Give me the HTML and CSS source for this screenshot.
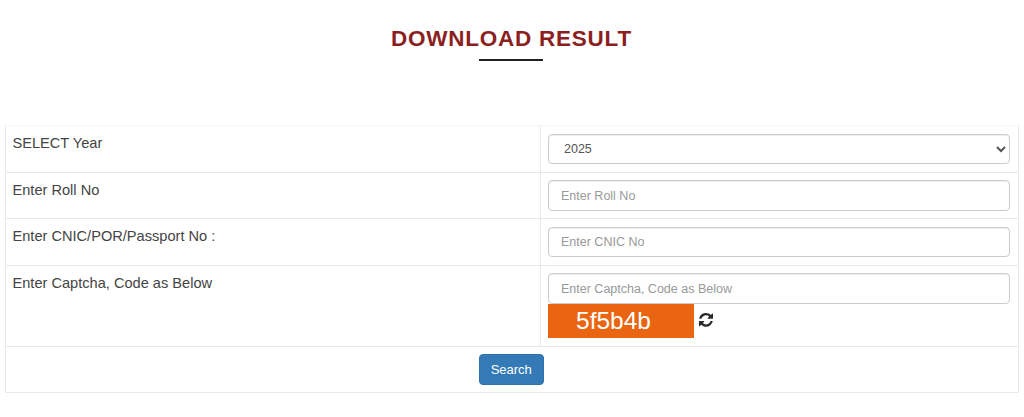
FILE: index.html
```html
<!DOCTYPE html>
<html lang="en">
<head>
<meta charset="utf-8">
<title>Download Result</title>
<link rel="stylesheet" href="styles.css">
</head>
<body>
<header class="heading">
  <h1>DOWNLOAD RESULT</h1>
  <div class="rule"></div>
</header>
<table class="form-table">
  <tbody>
    <tr>
      <td class="label">SELECT Year</td>
      <td class="field">
        <select class="control select"><option>2025</option></select>
      </td>
    </tr>
    <tr>
      <td class="label">Enter Roll No</td>
      <td class="field"><input class="control" type="text" placeholder="Enter Roll No"></td>
    </tr>
    <tr>
      <td class="label">Enter CNIC/POR/Passport No :</td>
      <td class="field"><input class="control" type="text" placeholder="Enter CNIC No"></td>
    </tr>
    <tr>
      <td class="label">Enter Captcha, Code as Below</td>
      <td class="field">
        <input class="control" type="text" placeholder="Enter Captcha, Code as Below">
        <div class="captcha-row">
          <div class="captcha">5f5b4b</div>
          <svg class="refresh" viewBox="0 0 1536 1536" aria-hidden="true"><path d="M1511 896q0 5-1 7-64 268-268 434.500T764 1504q-146 0-282.500-55T238 1292l-129 129q-19 19-45 19t-45-19-19-45V928q0-26 19-45t45-19h448q26 0 45 19t19 45-19 45L420 1110q71 66 161 102t187 36q134 0 250-65t186-179q11-17 53-117 8-23 30-23h192q13 0 22.500 9.500t9.500 22.500zM1536 128v448q0 26-19 45t-45 19h-448q-26 0-45-19t-19-45 19-45l138-138q-148-137-349-137-134 0-250 65T332 480q-11 17-53 117-8 23-30 23H50q-13 0-22.500-9.500T18 588v-7q65-268 270-434.500T768 0q146 0 284 55.500T1297 212l130-129q19-19 45-19t45 19 19 45z"/></svg>
        </div>
      </td>
    </tr>
    <tr>
      <td class="actions" colspan="2"><button class="btn" type="button">Search</button></td>
    </tr>
  </tbody>
</table>
</body>
</html>
```

FILE: styles.css
```css
* { box-sizing: border-box; }
html, body { margin: 0; padding: 0; background: #fff; }
body {
  height: 417px;
  overflow: hidden;
  font-family: "Liberation Sans", Arial, sans-serif;
  font-size: 14.6px;
  color: #444;
  padding: 0 5.5px 0 4.5px;
}
.heading {
  height: 125px;
  padding-top: 25px;
  text-align: center;
}
.heading h1 {
  margin: 0;
  font-size: 22.5px;
  line-height: 27px;
  font-weight: 700;
  letter-spacing: 0.75px;
  color: #8b1f1f;
}
.rule {
  width: 64px;
  height: 2px;
  margin: 7px 0 0 474px;
  background: #222;
}
.form-table {
  width: 100%;
  border-collapse: collapse;
  table-layout: fixed;
}
.form-table td {
  border: 1px solid #e9e9e9;
  padding: 7.5px 7.500px 7.5px 7px;
  vertical-align: top;
}
.form-table tr:first-child td { border-top-color: #f6f6f6; }
.form-table .label { width: 535.500px; padding-top: 8px; line-height: 18px; }
.control {
  display: block;
  width: 100%;
  height: 30.500px;
  padding: 1px 12px 0;
  border: 1px solid #ccc;
  border-radius: 4px;
  background: #fff;
  color: #555;
  font-family: inherit;
  font-size: 12.500px;
  box-shadow: inset 0 1px 1px rgba(0,0,0,.075);
}
.control::placeholder { color: #999; opacity: 1; }
.select { padding: 0 12px 0 11px; }
.captcha-row { display: flex; align-items: center; }
.captcha {
  width: 146px;
  height: 34.500px;
  padding-left: 28px;
  background: #e96511;
  color: #fff;
  font-size: 24.500px;
  line-height: 34px;
}
.refresh { width: 14px; height: 14px; margin: 0 0 2px 4.500px; fill: #2a2a2a; }
.form-table .actions { text-align: center; height: 45px; }
.btn {
  display: block;
  width: 65px;
  height: 30.500px;
  margin: 0 auto;
  padding: 0;
  border: 1px solid #2f72ab;
  border-radius: 4px;
  background: #337ab7;
  color: #fff;
  font-family: inherit;
  font-size: 13px;
}
```
